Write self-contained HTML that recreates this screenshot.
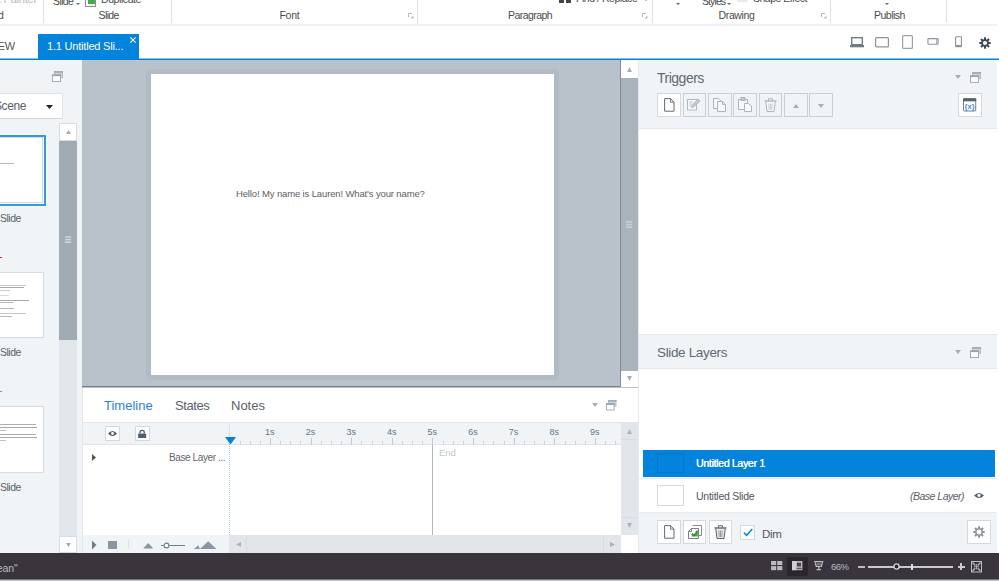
<!DOCTYPE html>
<html>
<head>
<meta charset="utf-8">
<title>Storyline</title>
<style>
html,body{margin:0;padding:0;}
body{width:999px;height:581px;overflow:hidden;position:relative;background:#fff;font-family:"Liberation Sans",sans-serif;color:#4a4f55;}
.abs{position:absolute;}
.t{position:absolute;white-space:nowrap;line-height:1;}
svg{position:absolute;overflow:visible;}
/* ribbon */
#ribbonline{left:0;top:24px;width:997px;height:2px;background:#edf0f4;}
.rsep{position:absolute;top:0;width:1px;height:23px;background:#dde1e5;}
.rl{font-size:10.5px;color:#4b4b4b;top:10px;}
.rc{font-size:10.5px;color:#4b4b4b;}
.launch{position:absolute;top:12.500px;width:6px;height:6px;}
/* tabs */
#tab{left:38px;top:34px;width:101px;height:25px;background:#0483dc;}
#tabline{left:0;top:58px;width:999px;height:2px;background:#0483dc;border-top:1px solid #84bfec;box-sizing:border-box;}
/* left */
#left{left:0;top:60px;width:82px;height:493px;background:#f0f4f7;}
.thumb{position:absolute;left:-1px;width:43px;background:#fff;border:1px solid #d6dce1;}
.slbl{font-size:10.5px;color:#5a6169;left:0px;letter-spacing:-0.5px;}
/* canvas */
#canvas{left:82px;top:60px;width:539px;height:326px;background:#b9c1ca;}
#canvasline{left:82px;top:386px;width:539px;height:1px;background:#7d7e81;}
#slideshadow{left:146px;top:69px;width:413px;height:311px;background:#b2bac4;border-radius:5px;}
#slide{left:151px;top:74px;width:403px;height:301px;background:#fff;}
.btnw{position:absolute;background:#fff;border:1px solid #d3d9de;box-sizing:border-box;}
.btnd{position:absolute;background:#f0f4f7;border:1px solid #c9cfd5;box-sizing:border-box;}
/* status */
#status{left:0;top:553px;width:999px;height:26px;background:#3a343d;}
#bottom{left:0;top:579px;width:999px;height:2px;background:#c8c8ca;border-top:1px solid #76727a;box-sizing:border-box;}
</style>
</head>
<body>
<!-- RIBBON -->
<div class="t" style="left:-33px;top:-6px;font-size:11px;color:#b9b9b9;letter-spacing:-0.2px;">Format Painter</div>
<div class="t rl" style="left:-41px;">Clipboard</div>
<div class="rsep" style="left:43px;"></div>
<div class="t rc" style="left:53px;top:-4px;letter-spacing:-0.6px;">Slide</div>
<svg style="left:76px;top:3px" width="4" height="2" viewBox="0 0 4 2"><path d="M0 0h4l-2 2z" fill="#666"/></svg>
<div class="abs" style="left:85px;top:-4px;width:9px;height:9px;border:1px solid #8a8f94;background:#fff;"></div>
<div class="abs" style="left:88px;top:-2px;width:7px;height:6px;background:#4aa84a;"></div>
<div class="t rc" style="left:101px;top:-6px;letter-spacing:-0.42px;">Duplicate</div>
<div class="t rl" style="left:98.5px;letter-spacing:-0.6px;">Slide</div>
<div class="rsep" style="left:171px;"></div>
<div class="t rl" style="left:279.5px;letter-spacing:-0.3px;">Font</div>
<svg class="launch" style="left:408px" viewBox="0 0 6 6"><path d="M0.5 4V0.5H4" fill="none" stroke="#b5babf" stroke-width="1"/><path d="M5.5 2.5v3h-3z" fill="#b5babf"/></svg>
<div class="rsep" style="left:417px;"></div>
<div class="abs" style="left:559px;top:0;width:5px;height:3px;background:#444;"></div>
<div class="abs" style="left:566px;top:0;width:5px;height:3px;background:#444;"></div>
<div class="t rc" style="left:576px;top:-7px;letter-spacing:-0.46px;">Find / Replace</div>
<svg style="left:643.500px;top:-1px" width="4" height="2" viewBox="0 0 4 2"><path d="M0 0h4l-2 2z" fill="#888"/></svg>
<div class="abs" style="left:737px;top:0;width:11px;height:2px;background:#e4e9ee;border-radius:0 0 3px 3px;"></div>
<div class="t rl" style="left:508px;letter-spacing:-0.55px;">Paragraph</div>
<svg class="launch" style="left:642px" viewBox="0 0 6 6"><path d="M0.5 4V0.5H4" fill="none" stroke="#b5babf" stroke-width="1"/><path d="M5.5 2.5v3h-3z" fill="#b5babf"/></svg>
<div class="rsep" style="left:652px;"></div>
<svg style="left:676px;top:3px" width="4" height="2" viewBox="0 0 4 2"><path d="M0 0h4l-2 2z" fill="#666"/></svg>
<div class="t rc" style="left:702px;top:-4px;letter-spacing:-0.9px;">Styles</div>
<svg style="left:727px;top:3px" width="4" height="2" viewBox="0 0 4 2"><path d="M0 0h4l-2 2z" fill="#666"/></svg>
<div class="t rc" style="left:753px;top:-7.500px;letter-spacing:-0.5px;">Shape Effect</div>
<div class="t rl" style="left:718.5px;letter-spacing:-0.35px;">Drawing</div>
<svg class="launch" style="left:821px" viewBox="0 0 6 6"><path d="M0.5 4V0.5H4" fill="none" stroke="#b5babf" stroke-width="1"/><path d="M5.5 2.5v3h-3z" fill="#b5babf"/></svg>
<div class="rsep" style="left:830px;"></div>
<svg style="left:885px;top:3px" width="4" height="2" viewBox="0 0 4 2"><path d="M0 0h4l-2 2z" fill="#666"/></svg>
<div class="t rl" style="left:874px;letter-spacing:-0.5px;">Publish</div>
<div class="rsep" style="left:946px;"></div>
<div id="ribbonline" class="abs"></div>

<!-- TABS -->
<div class="t" style="left:-12px;top:41px;font-size:11px;color:#555;letter-spacing:-0.3px;">VIEW</div>
<div id="tabline" class="abs"></div>
<div id="tab" class="abs"></div>
<div class="t" style="left:47px;top:41px;font-size:11px;color:#fff;letter-spacing:-0.2px;">1.1 Untitled Sli...</div>
<svg style="left:130px;top:37px" width="6" height="6" viewBox="0 0 6 6"><path d="M0.3 0.3L5.7 5.7M5.7 0.3L0.3 5.7" stroke="#fff" stroke-width="1.1" fill="none"/></svg>
<!-- device icons -->
<svg style="left:850px;top:36.700px" width="14" height="11" viewBox="0 0 14 11"><rect x="1.7" y="0.7" width="10.6" height="7" fill="#fff" stroke="#6f7d8a" stroke-width="1.4"/><rect x="0" y="8" width="14" height="2.3" fill="#6f7d8a"/></svg>
<svg style="left:875px;top:36.700px" width="14" height="11" viewBox="0 0 14 11"><rect x="0.6" y="0.6" width="12.8" height="9.3" rx="1" fill="#fff" stroke="#8d959c" stroke-width="1.2"/></svg>
<svg style="left:902px;top:34.500px" width="11" height="14" viewBox="0 0 11 14"><rect x="0.6" y="0.6" width="9.8" height="12.8" rx="1" fill="#fff" stroke="#9aa1a8" stroke-width="1.2"/></svg>
<svg style="left:927px;top:38.200px" width="12" height="7.500" viewBox="0 0 12 8"><rect x="0.6" y="0.6" width="10.8" height="6" rx="0.8" fill="#fff" stroke="#8d959c" stroke-width="1.2"/><rect x="9.3" y="1" width="1.6" height="5.4" fill="#aab1b7"/></svg>
<svg style="left:955px;top:35.600px" width="7.500" height="11.500" viewBox="0 0 8 12"><rect x="0.6" y="0.6" width="6.3" height="10.6" rx="0.8" fill="#fff" stroke="#8d959c" stroke-width="1.2"/><rect x="1" y="9.4" width="5.6" height="1.6" fill="#8d959c"/></svg>
<svg style="left:978.700px;top:36.500px" width="12" height="12" viewBox="-6.5 -6.5 13 13"><g fill="#3d4a56"><circle r="4.1"/><g id="gt"><rect x="-1.1" y="-6.2" width="2.2" height="12.4"/><rect x="-6.2" y="-1.1" width="12.4" height="2.2"/></g><use href="#gt" transform="rotate(45)"/></g><circle r="2.3" fill="#fff"/></svg>

<!-- LEFT PANEL -->
<div id="left" class="abs"></div>
<svg style="left:52px;top:71px" width="11" height="11" viewBox="0 0 11 11"><rect x="2.5" y="0.5" width="8" height="6" fill="#cbd2d8" stroke="#b6bec6"/><rect x="2" y="0" width="9" height="1.8" fill="#a3adb6"/><rect x="0.5" y="4" width="8" height="6.5" fill="#fff" stroke="#a6afb7"/><rect x="0" y="3.5" width="9" height="1.6" fill="#98a2ab"/></svg>
<div class="btnw" style="left:-2px;top:93px;width:65px;height:26px;border-color:#dfe4e8;border-bottom-color:#d3d9de;border-radius:1px;"></div>
<div class="t" style="left:-6px;top:100px;font-size:12px;color:#5a6169;letter-spacing:-0.4px;">Scene</div>
<svg style="left:46px;top:105px" width="7" height="4" viewBox="0 0 7 4"><path d="M0 0h7l-3.5 4z" fill="#222"/></svg>
<!-- thumbs -->
<div class="abs" style="left:-2px;top:135px;width:44px;height:67px;background:#fff;border:2px solid #3099e3;box-shadow:0 0 0 1px #f6f9fb;"></div>
<div class="abs" style="left:-1px;top:137px;width:44px;height:66px;border:1px solid #d9dadd;box-sizing:border-box;"></div>
<div class="abs" style="left:0;top:163px;width:14px;height:1px;background:#b8b8b8;"></div>
<div class="t slbl" style="top:212.5px;">Slide</div>
<div class="thumb" style="top:272px;height:64px;"></div>
<div class="abs" style="left:0;top:257px;width:2px;height:1px;background:#c0392b;"></div>
<div class="abs" style="left:0;top:285px;width:26px;height:1px;background:#c4c4c4;"></div>
<div class="abs" style="left:0;top:287px;width:24px;height:1px;background:#a8a8a8;"></div>
<div class="abs" style="left:0;top:290px;width:10px;height:1px;background:#cacaca;"></div>
<div class="abs" style="left:0;top:295px;width:9px;height:1px;background:#d8d8d8;"></div>
<div class="abs" style="left:0;top:300px;width:29px;height:1px;background:#a8a8a8;"></div>
<div class="abs" style="left:0;top:302px;width:13px;height:1px;background:#b8b8b8;"></div>
<div class="abs" style="left:0;top:308px;width:14px;height:1px;background:#b4b4b4;"></div>
<div class="abs" style="left:0;top:313px;width:26px;height:1px;background:#c4c4c4;"></div>
<div class="abs" style="left:0;top:316px;width:12px;height:1px;background:#b4b4b4;"></div>
<div class="t slbl" style="top:347px;">Slide</div>
<div class="thumb" style="top:406px;height:65px;"></div>
<div class="abs" style="left:0;top:391px;width:2px;height:1px;background:#909090;"></div>
<div class="abs" style="left:0;top:424px;width:36px;height:1px;background:#b0b0b0;"></div>
<div class="abs" style="left:0;top:427px;width:37px;height:1px;background:#a8a8a8;"></div>
<div class="abs" style="left:0;top:430px;width:6px;height:1px;background:#c0c0c0;"></div>
<div class="abs" style="left:0;top:434px;width:36px;height:1px;background:#b0b0b0;"></div>
<div class="abs" style="left:0;top:437px;width:37px;height:1px;background:#a8a8a8;"></div>
<div class="abs" style="left:0;top:440px;width:6px;height:1px;background:#c0c0c0;"></div>
<div class="t slbl" style="top:482px;">Slide</div>
<!-- left scrollbar -->
<div class="abs" style="left:59px;top:123px;width:18px;height:430px;background:#e2e7eb;"></div>
<div class="abs" style="left:59px;top:140px;width:18px;height:200px;background:#a0aab2;"></div>
<div class="btnw" style="left:59px;top:123px;width:18px;height:18px;border-color:#d8dde2;"></div>
<svg style="left:66px;top:130px" width="5" height="4" viewBox="0 0 5 4"><path d="M0 4h5l-2.5-4z" fill="#a3adb6"/></svg>
<svg style="left:65px;top:236px" width="6.200" height="7" viewBox="0 0 6.200 7"><g fill="#cbd2d8"><rect x="0" y="0.100" width="6.200" height="1.600"/><rect x="0" y="2.800" width="6.200" height="1.500"/><rect x="0" y="5.300" width="6.200" height="1.700"/></g></svg>
<div class="btnw" style="left:59px;top:536px;width:18px;height:17px;border-color:#d8dde2;"></div>
<svg style="left:66px;top:543px" width="5" height="4" viewBox="0 0 5 4"><path d="M0 0h5l-2.5 4z" fill="#a3adb6"/></svg>

<!-- CANVAS -->
<div id="canvas" class="abs"></div>
<div id="slideshadow" class="abs"></div>
<div id="slide" class="abs"></div>
<div class="t" style="left:236px;top:189px;font-size:9.5px;color:#606060;letter-spacing:-0.135px;">Hello! My name is Lauren! What's your name?</div>
<!-- canvas scrollbar -->
<div class="abs" style="left:620px;top:60px;width:18px;height:326px;background:#a9b3bc;"></div>
<div class="abs" style="left:620px;top:60px;width:1px;height:326px;background:#848b92;"></div>
<div class="abs" style="left:621px;top:60px;width:17px;height:18px;background:#fff;"></div>
<svg style="left:627px;top:67px" width="5" height="5" viewBox="0 0 5 5"><path d="M0 5h5l-2.500-5z" fill="#a3b0bb"/></svg>
<svg style="left:626px;top:221px" width="6.200" height="7" viewBox="0 0 6.200 7"><g fill="#c9d1d8"><rect x="0" y="0.100" width="6.200" height="1.600"/><rect x="0" y="2.800" width="6.200" height="1.500"/><rect x="0" y="5.300" width="6.200" height="1.700"/></g></svg>
<div class="abs" style="left:621px;top:371px;width:17px;height:16px;background:#fff;"></div>
<svg style="left:627px;top:376px" width="5" height="5" viewBox="0 0 5 5"><path d="M0 0h5l-2.500 5z" fill="#a3b0bb"/></svg>
<div id="canvasline" class="abs"></div>
<div class="abs" style="left:82px;top:387px;width:556px;height:1px;background:#b4c1cf;"></div>

<!-- TIMELINE -->
<div class="abs" style="left:82px;top:388px;width:1px;height:165px;background:#e3e8ec;"></div>
<div class="t" style="left:104px;top:399px;font-size:13px;color:#2e7fd6;">Timeline</div>
<div class="t" style="left:175px;top:399px;font-size:13px;color:#5a6169;letter-spacing:-0.4px;">States</div>
<div class="t" style="left:231px;top:399px;font-size:13px;color:#5a6169;">Notes</div>
<svg style="left:592px;top:403px" width="6" height="4" viewBox="0 0 6 4"><path d="M0 0h6l-3 4z" fill="#a3adb6"/></svg>
<svg style="left:606px;top:399.5px" width="10.5" height="10.5" viewBox="0 0 11 11"><rect x="2.5" y="0.5" width="8" height="6" fill="#cbd2d8" stroke="#b6bec6"/><rect x="2" y="0" width="9" height="1.8" fill="#a3adb6"/><rect x="0.5" y="4" width="8" height="6.5" fill="#fff" stroke="#a6afb7"/><rect x="0" y="3.5" width="9" height="1.6" fill="#98a2ab"/></svg>
<div class="abs" style="left:83px;top:422px;width:538px;height:23px;background:#f0f4f7;border-top:1px solid #e1e6ea;box-sizing:border-box;border-bottom:1px solid #e1e6ea;"></div>
<div class="abs" style="left:229px;top:423px;width:1px;height:14px;background:#dde2e6;"></div>
<div class="btnw" style="left:105px;top:426px;width:15px;height:15px;"></div>
<svg style="left:108px;top:430px" width="9" height="7" viewBox="0 0 9 7"><path d="M0 3.500Q4.500 -1.500 9 3.500Q4.500 8.500 0 3.500z" fill="#4d5d6b"/><circle cx="4.500" cy="3.500" r="1.400" fill="#fff"/></svg>
<div class="btnw" style="left:135px;top:426px;width:15px;height:15px;"></div>
<svg style="left:137.700px;top:429.500px" width="8.300" height="8" viewBox="0 0 9 9"><rect x="0" y="4" width="9" height="5" fill="#4d5d6b"/><path d="M2.200 4V2.500a2.300 2 0 0 1 4.600 0V4" fill="none" stroke="#4d5d6b" stroke-width="1.500"/></svg>
<!-- ruler -->
<svg style="left:0;top:422px" width="621" height="24" viewBox="0 0 621 24"><path d="M270.5 16V23M311.5 16V23M351.5 16V23M392.5 16V23M432.5 16V23M473.5 16V23M514.5 16V23M554.5 16V23M595.5 16V23" stroke="#c3cad1" stroke-width="1" fill="none"/><path d="M240.5 19V23M250.5 19V23M260.5 19V23M280.5 19V23M290.5 19V23M300.5 19V23M321.5 19V23M331.5 19V23M341.5 19V23M361.5 19V23M372.5 19V23M382.5 19V23M402.5 19V23M412.5 19V23M422.5 19V23M443.5 19V23M453.5 19V23M463.5 19V23M483.5 19V23M493.5 19V23M504.5 19V23M524.5 19V23M534.5 19V23M544.5 19V23M565.5 19V23M575.5 19V23M585.5 19V23M605.5 19V23M615.5 19V23" stroke="#ccd3d9" stroke-width="1" fill="none"/><text x="274.6" y="13.3" text-anchor="end" font-size="9" fill="#68747f" font-family="Liberation Sans, sans-serif">1s</text><text x="315.2" y="13.3" text-anchor="end" font-size="9" fill="#68747f" font-family="Liberation Sans, sans-serif">2s</text><text x="355.9" y="13.3" text-anchor="end" font-size="9" fill="#68747f" font-family="Liberation Sans, sans-serif">3s</text><text x="396.5" y="13.3" text-anchor="end" font-size="9" fill="#68747f" font-family="Liberation Sans, sans-serif">4s</text><text x="437.1" y="13.3" text-anchor="end" font-size="9" fill="#68747f" font-family="Liberation Sans, sans-serif">5s</text><text x="477.7" y="13.3" text-anchor="end" font-size="9" fill="#68747f" font-family="Liberation Sans, sans-serif">6s</text><text x="518.3" y="13.3" text-anchor="end" font-size="9" fill="#68747f" font-family="Liberation Sans, sans-serif">7s</text><text x="559.0" y="13.3" text-anchor="end" font-size="9" fill="#68747f" font-family="Liberation Sans, sans-serif">8s</text><text x="599.6" y="13.3" text-anchor="end" font-size="9" fill="#68747f" font-family="Liberation Sans, sans-serif">9s</text></svg>
<svg style="left:225px;top:437px" width="11" height="8" viewBox="0 0 11 8"><path d="M0 0h11l-5.500 7.500z" fill="#0483dc"/></svg>
<div class="abs" style="left:229px;top:444px;width:0;height:91px;border-left:1px dotted #9dc4ee;"></div>
<!-- row -->
<svg style="left:92px;top:454px" width="4" height="7" viewBox="0 0 4 7"><path d="M0 0v7l4-3.500z" fill="#555"/></svg>
<div class="t" style="left:169px;top:452.5px;font-size:10px;color:#5f666d;letter-spacing:-0.4px;">Base Layer ...</div>
<div class="abs" style="left:432px;top:445px;width:1px;height:90px;background:#aeb7c0;"></div>
<div class="t" style="left:439px;top:448px;font-size:9.500px;color:#bcc7d0;">End</div>
<!-- timeline bottom -->
<div class="abs" style="left:83px;top:535px;width:147px;height:18px;background:#f0f4f7;"></div>
<div class="abs" style="left:229px;top:535px;width:392px;height:18px;background:#e2e6ea;"></div>
<div class="abs" style="left:246px;top:535px;width:1px;height:18px;background:#d7dce2;"></div>
<div class="abs" style="left:603px;top:535px;width:1px;height:18px;background:#d7dce2;"></div>
<svg style="left:236px;top:541.700px" width="5" height="5" viewBox="0 0 5 5"><path d="M5 0v5l-5-2.500z" fill="#aab3bd"/></svg>
<svg style="left:609.500px;top:541.700px" width="5" height="5" viewBox="0 0 5 5"><path d="M0 0v5l5-2.500z" fill="#aab3bd"/></svg>
<svg style="left:92px;top:539.500px" width="4.500" height="10" viewBox="0 0 5 10"><path d="M0 0v10l5-5z" fill="#6f7d8a"/></svg>
<div class="abs" style="left:108px;top:541px;width:9px;height:8px;background:#8a96a1;"></div>
<div class="abs" style="left:128px;top:539px;width:1px;height:10px;background:#dde2e6;"></div>
<svg style="left:142.500px;top:542.500px" width="10.500" height="5.500" viewBox="0 0 11 6"><path d="M0 6h11l-5.500-6z" fill="#8a96a1"/></svg>
<svg style="left:161px;top:542.200px" width="25" height="7" viewBox="0 0 25 7"><path d="M0 3.500h2.500M8.500 3.500H24" stroke="#6f7d8a" stroke-width="1.200" fill="none"/><circle cx="5.500" cy="3.500" r="2.400" fill="#fff" stroke="#6f7d8a" stroke-width="1.200"/></svg>
<svg style="left:194px;top:540.700px" width="22.500" height="8.300" viewBox="0 0 23 8"><path d="M0 8h6l-1.500-4z" fill="#8a96a1"/><path d="M6 8h17l-8.500-8z" fill="#8a96a1"/></svg>
<!-- timeline vscroll -->
<div class="abs" style="left:621px;top:422px;width:17px;height:113px;background:#e2e6ea;"></div>
<div class="abs" style="left:621px;top:439px;width:17px;height:1px;background:#d7dce2;"></div>
<div class="abs" style="left:621px;top:517px;width:17px;height:1px;background:#d7dce2;"></div>
<svg style="left:627px;top:429px" width="5" height="5" viewBox="0 0 5 5"><path d="M0 5h5l-2.500-5z" fill="#aab3bd"/></svg>
<svg style="left:627px;top:523px" width="5" height="5" viewBox="0 0 5 5"><path d="M0 0h5l-2.500 5z" fill="#aab3bd"/></svg>

<!-- RIGHT PANEL -->
<div class="abs" style="left:638px;top:60px;width:1px;height:493px;background:#e6eaee;"></div>
<div class="abs" style="left:639px;top:60px;width:358px;height:68px;background:#f0f4f7;border-bottom:1px solid #e3e8ec;"></div>
<div class="t" style="left:657px;top:71px;font-size:14px;color:#626970;letter-spacing:-0.5px;">Triggers</div>
<svg style="left:955px;top:75px" width="6" height="4" viewBox="0 0 6 4"><path d="M0 0h6l-3 4z" fill="#a3adb6"/></svg>
<svg style="left:970px;top:72px" width="11" height="11" viewBox="0 0 11 11"><rect x="2.5" y="0.5" width="8" height="6" fill="#cbd2d8" stroke="#b6bec6"/><rect x="2" y="0" width="9" height="1.8" fill="#a3adb6"/><rect x="0.5" y="4" width="8" height="6.5" fill="#fff" stroke="#a6afb7"/><rect x="0" y="3.5" width="9" height="1.6" fill="#98a2ab"/></svg>
<div class="btnw" style="left:657px;top:93px;width:24px;height:24px;"></div><div class="btnd" style="left:683px;top:93px;width:23px;height:24px;"></div><div class="btnd" style="left:708px;top:93px;width:24px;height:24px;"></div><div class="btnd" style="left:733px;top:93px;width:24px;height:24px;"></div><div class="btnd" style="left:759px;top:93px;width:23px;height:24px;"></div><div class="btnd" style="left:784px;top:93px;width:24px;height:24px;"></div><div class="btnd" style="left:809px;top:93px;width:24px;height:24px;"></div><svg style="left:664px;top:98px" width="11" height="14" viewBox="0 0 11 14"><path d="M0.600 0.600H6.500L10 4.200V13.200H0.600z" fill="#fff" stroke="#666c72" stroke-width="1"/><path d="M6.500 0.600V4.200H10" fill="none" stroke="#666c72" stroke-width="0.900"/></svg><svg style="left:687px;top:98px" width="14" height="13" viewBox="0 0 14 13"><rect x="0.500" y="1.500" width="9" height="10.500" fill="#f7f9fa" stroke="#b4b9be"/><path d="M2 4h4M2 6h3M2 8h3" stroke="#c3c8cc" stroke-width="1"/><path d="M4.500 9.500L5.500 6.800L11 1L13 3L7.200 8.600z" fill="#c6cacf" stroke="#a9aeb3" stroke-width="0.800"/></svg><svg style="left:713px;top:98px" width="13" height="14" viewBox="0 0 13 14"><path d="M0.500 0.500H5.500L8 3V10.500H0.500z" fill="#f7f9fa" stroke="#b0b5ba"/><path d="M4.500 3.500H9.500L12.500 6.500V13.500H4.500z" fill="#f7f9fa" stroke="#b0b5ba"/><path d="M9.500 3.500V6.500H12.500" fill="none" stroke="#b0b5ba"/></svg><svg style="left:738px;top:97px" width="14" height="15" viewBox="0 0 14 15"><rect x="0.500" y="2.500" width="9" height="10" fill="#f7f9fa" stroke="#b0b5ba"/><rect x="3" y="0.500" width="4" height="3" fill="#c6cacf" stroke="#b0b5ba"/><path d="M6.500 6.500H10.500L13.500 9V14.500H6.500z" fill="#f7f9fa" stroke="#b0b5ba"/></svg><svg style="left:764px;top:98px" width="13" height="14" viewBox="0 0 13 14"><path d="M0.500 3H12.500" stroke="#b0b5ba" stroke-width="1.400"/><path d="M4.500 2.500V0.700H8.500V2.500" fill="none" stroke="#b0b5ba"/><path d="M1.800 4L3 13.500H10L11.200 4" fill="#f7f9fa" stroke="#b0b5ba"/><path d="M4.800 5.500L5.200 12M8.200 5.500L7.800 12M6.500 5.500V12" stroke="#c3c8cc" stroke-width="0.900"/></svg><svg style="left:793px;top:104px" width="6" height="4" viewBox="0 0 6 4"><path d="M0 4h6l-3-4z" fill="#a8aeb4"/></svg><svg style="left:818px;top:104px" width="6" height="4" viewBox="0 0 6 4"><path d="M0 0h6l-3 4z" fill="#a8aeb4"/></svg><div class="btnw" style="left:957.500px;top:93px;width:24px;height:24px;"></div><svg style="left:963px;top:98px" width="13.200" height="13.800" viewBox="0 0 14 14"><rect x="0.500" y="0.500" width="13" height="13" rx="1" fill="#fff" stroke="#6a7781"/><rect x="0" y="0" width="14" height="3.200" fill="#56646e"/><text x="7" y="11.300" text-anchor="middle" font-size="8" font-weight="bold" fill="#4a86d8" font-family="Liberation Sans, sans-serif">{x}</text></svg>

<!-- slide layers -->
<div class="abs" style="left:639px;top:334px;width:358px;height:35px;background:#f0f4f7;border-top:1px solid #e3e8ec;border-bottom:1px solid #e3e8ec;box-sizing:border-box;"></div>
<div class="t" style="left:657px;top:346px;font-size:13.500px;color:#626970;letter-spacing:-0.35px;">Slide Layers</div>
<svg style="left:955px;top:350px" width="6" height="4" viewBox="0 0 6 4"><path d="M0 0h6l-3 4z" fill="#a3adb6"/></svg>
<svg style="left:970px;top:347px" width="11" height="11" viewBox="0 0 11 11"><rect x="2.5" y="0.5" width="8" height="6" fill="#cbd2d8" stroke="#b6bec6"/><rect x="2" y="0" width="9" height="1.8" fill="#a3adb6"/><rect x="0.5" y="4" width="8" height="6.5" fill="#fff" stroke="#a6afb7"/><rect x="0" y="3.5" width="9" height="1.6" fill="#98a2ab"/></svg>
<div class="abs" style="left:643px;top:450px;width:352px;height:27px;background:#0483dc;"></div>
<div class="abs" style="left:657px;top:453px;width:27px;height:20px;border:1px solid #0676c8;box-sizing:border-box;"></div>
<div class="t" style="left:696px;top:458px;font-size:10.500px;color:#fff;letter-spacing:-0.3px;text-shadow:0.250px 0 0 #fff;">Untitled Layer 1</div>
<div class="abs" style="left:639px;top:478px;width:358px;height:1px;background:#e8ecef;"></div>
<div class="btnw" style="left:657px;top:485px;width:27px;height:21px;"></div>
<div class="t" style="left:696px;top:490.600px;font-size:10.500px;color:#4f565d;letter-spacing:-0.250px;">Untitled Slide</div>
<div class="t" style="left:910px;top:490.600px;font-size:10.500px;color:#5a6066;font-style:italic;letter-spacing:-0.500px;">(Base Layer)</div>
<svg style="left:973.700px;top:492.300px" width="10" height="7" viewBox="0 0 9 7" preserveAspectRatio="none"><path d="M0 3.500Q4.500 -1.500 9 3.500Q4.500 8.500 0 3.500z" fill="#4e6470"/><circle cx="4.500" cy="3.500" r="1.400" fill="#fff"/></svg>
<div class="abs" style="left:639px;top:512px;width:358px;height:41px;background:#f0f4f7;border-top:1px solid #e8ecef;box-sizing:border-box;"></div>
<div class="btnw" style="left:657px;top:520px;width:24px;height:24px;"></div><div class="btnw" style="left:683px;top:520px;width:23px;height:24px;"></div><div class="btnw" style="left:709px;top:520px;width:23px;height:24px;"></div><svg style="left:664px;top:525px" width="11" height="14" viewBox="0 0 11 14"><path d="M0.600 0.600H6.500L10 4.200V13.200H0.600z" fill="#fff" stroke="#666c72" stroke-width="1"/><path d="M6.500 0.600V4.200H10" fill="none" stroke="#666c72" stroke-width="0.900"/></svg><svg style="left:687.500px;top:524.800px" width="14" height="14" viewBox="0 0 14 14"><path d="M4.500 0.500H13.500V10.500H10" fill="#fff" stroke="#7a8087" stroke-width="0.900"/><path d="M3.500 3.500H10.500V13.500H0.500V6.500z" fill="#fff" stroke="#6a7077" stroke-width="0.900"/><path d="M3.500 3.500V6.500H0.500" fill="none" stroke="#6a7077" stroke-width="0.800"/><path d="M3.800 8.800L6 10.800L9.800 5.800V11.500H3.800z" fill="#4aa84a"/><path d="M3.800 8.600L6 10.600L9.600 5.600" fill="none" stroke="#2e8b2e" stroke-width="1.500"/></svg><svg style="left:714px;top:525px" width="13" height="14" viewBox="0 0 13 14"><path d="M0.500 3H12.500" stroke="#5a6169" stroke-width="1.400"/><path d="M4.500 2.500V0.700H8.500V2.500" fill="none" stroke="#5a6169"/><path d="M1.800 4L3 13.500H10L11.200 4" fill="#e8ebee" stroke="#5a6169"/><path d="M4.800 5.500L5.200 12M8.200 5.500L7.800 12M6.500 5.500V12" stroke="#8a9198" stroke-width="0.900"/></svg><div class="btnw" style="left:740px;top:525px;width:15px;height:15px;"></div><svg style="left:743px;top:528px" width="10" height="9" viewBox="0 0 10 9"><path d="M0.800 4.500L3.600 7.300L9.300 1" fill="none" stroke="#0483dc" stroke-width="1.500"/></svg><div class="t" style="left:762px;top:528.600px;font-size:11.500px;color:#4f565d;letter-spacing:-0.300px;">Dim</div><div class="btnw" style="left:967px;top:520px;width:24px;height:24px;"></div><svg style="left:973px;top:526px" width="12" height="12" viewBox="-6.500 -6.500 13 13"><g fill="#8a949c"><circle r="4.100"/><g id="gt2"><rect x="-1.100" y="-6.200" width="2.200" height="12.400"/><rect x="-6.200" y="-1.100" width="12.400" height="2.200"/></g><use href="#gt2" transform="rotate(45)"/></g><circle r="2.700" fill="#fff"/></svg>

<!-- STATUS -->
<div id="status" class="abs"></div>
<div class="t" style="left:-5.500px;top:562.500px;font-size:10.500px;color:#b9bbbf;letter-spacing:-0.1px;">lean"</div>
<svg style="left:771px;top:561px" width="11.400" height="9.200" viewBox="0 0 11 9"><g fill="#bdbbc0"><rect x="0" y="0" width="5" height="4"/><rect x="6" y="0" width="5" height="4"/><rect x="0" y="5" width="5" height="4"/><rect x="6" y="5" width="5" height="4"/></g></svg><div class="abs" style="left:787px;top:557px;width:21px;height:19px;background:#2b252e;border-radius:2px;"></div><svg style="left:791.800px;top:560.800px" width="10.400" height="9.200" viewBox="0 0 10.400 9.200"><rect x="0" y="0" width="10.400" height="9.200" fill="#bdbbc0"/><rect x="0" y="0" width="4" height="9.200" fill="#d2d0d4"/><rect x="5" y="1.700" width="4" height="3.700" fill="#4a444d"/><rect x="4.600" y="6.800" width="5" height="1.300" fill="#5a545d"/></svg><svg style="left:813.500px;top:561px" width="9.600" height="9.200" viewBox="0 0 10 10"><path d="M0 0.700H10" stroke="#bdbbc0" stroke-width="1.400"/><path d="M1 1.400L2.200 5.800H7.800L9 1.400" fill="none" stroke="#bdbbc0" stroke-width="1.300"/><path d="M2.500 3.300H7.500" stroke="#bdbbc0" stroke-width="1"/><path d="M5 5.800V8.800M2.600 9.300H7.400" stroke="#bdbbc0" stroke-width="1.300"/></svg><div class="t" style="left:831px;top:562px;font-size:9.500px;color:#b9bcc3;letter-spacing:-0.500px;">66%</div><div class="abs" style="left:858px;top:565.500px;width:6.500px;height:2.300px;background:#bdbbc0;"></div><div class="abs" style="left:868px;top:566px;width:85px;height:2px;background:#cbc9ce;"></div><div class="abs" style="left:911px;top:564px;width:2px;height:6px;background:#dddce0;"></div><svg style="left:892.500px;top:562.700px" width="7" height="7" viewBox="0 0 7 7"><circle cx="3.500" cy="3.500" r="2.600" fill="#2b252e" stroke="#d6d5d9" stroke-width="1.400"/></svg><div class="abs" style="left:957.500px;top:565.500px;width:7px;height:2.200px;background:#cbc9ce;"></div><div class="abs" style="left:960px;top:563px;width:2.200px;height:7px;background:#cbc9ce;"></div><svg style="left:971px;top:560.500px" width="11" height="11.500" viewBox="0 0 11 11.500"><rect x="0.500" y="0.500" width="10" height="10.500" fill="none" stroke="#bdbbc0"/><path d="M1.500 1.500L4.300 4.500M9.500 1.500L6.700 4.500M1.500 10L4.300 7M9.500 10L6.700 7" stroke="#bdbbc0" stroke-width="1.200" fill="none"/><path d="M3 5.750H8M5.500 3V8.500" stroke="#bdbbc0" stroke-width="0.800"/></svg>
<div id="bottom" class="abs"></div>
</body>
</html>
